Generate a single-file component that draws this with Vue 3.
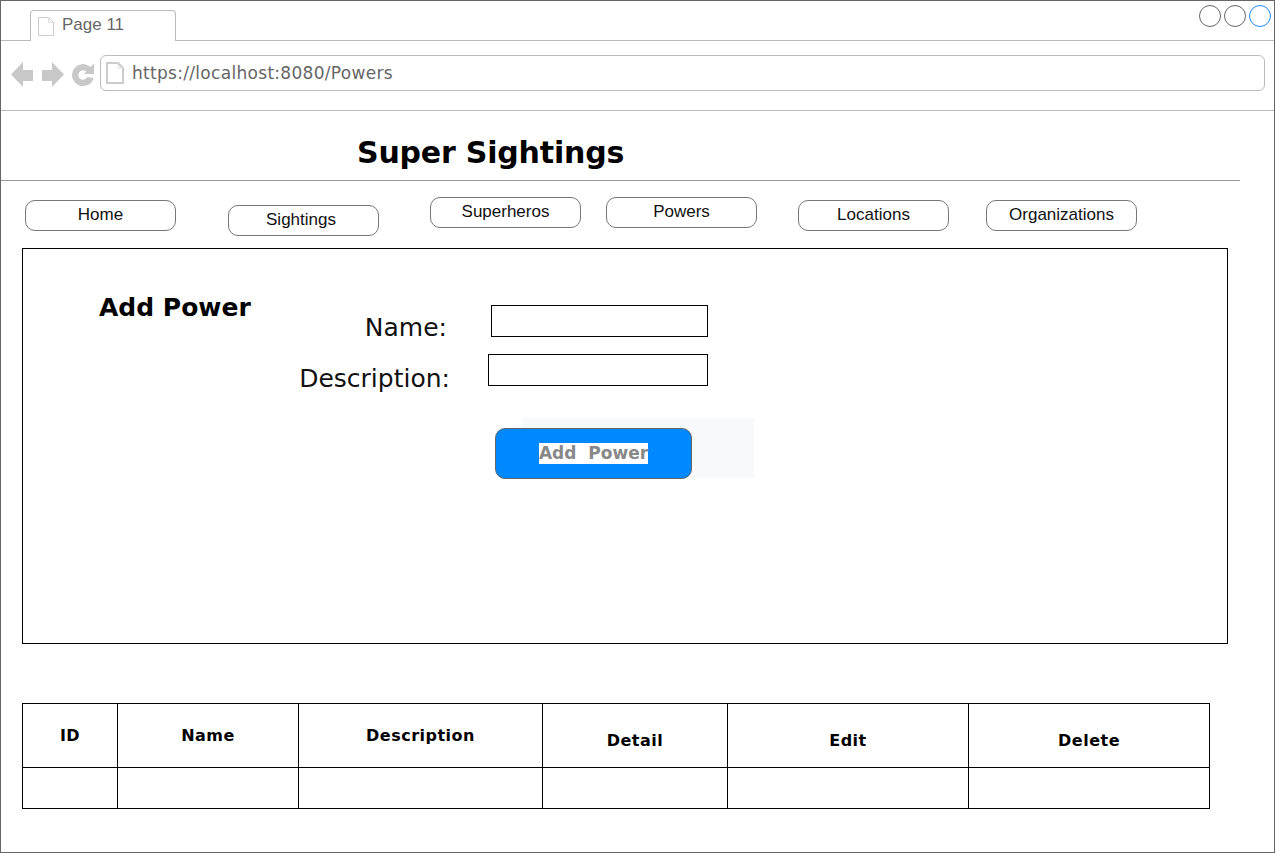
<template>
  <div class="window">
    <div class="tab-strip">
      <div class="tab">
        <svg class="page-icon" width="16" height="19" viewBox="0 0 16 19">
          <path d="M0.5 0.5H10.5L15.5 5.5V18.5H0.5Z" fill="#fff" stroke="#ccc" />
          <path d="M10.5 0.5V5.5H15.5" fill="none" stroke="#ddd" />
        </svg>
        <span>Page 11</span>
      </div>
      <div class="controls">
        <span class="dot"></span>
        <span class="dot"></span>
        <span class="dot dot-blue"></span>
      </div>
    </div>

    <div class="address-row">
      <svg class="nav-arrows" width="84" height="26" viewBox="0 0 84 26">
        <path d="M0 13.5L12 1V9H22V20H12V26Z" fill="#c8c8c8" />
        <path d="M53 13.5L41 1V9H31V20H41V26Z" fill="#c8c8c8" />
        <path
          d="M82.7 17A11 11 0 1 1 79.5 6L83 2.5V13H72.5L75.5 10.8A4.7 4.7 0 1 0 76.3 16Z"
          fill="#c8c8c8"
        />
      </svg>
      <div class="address">
        <svg class="address-icon" width="18" height="22" viewBox="0 0 18 22">
          <path d="M1 1H12L17 6V21H1Z" fill="#fff" stroke="#ccc" stroke-width="2" />
          <path d="M12 1V6H17" fill="none" stroke="#ddd" />
        </svg>
        <span>https://localhost:8080/Powers</span>
      </div>
    </div>

    <header class="title-row">
      <h1>Super Sightings</h1>
    </header>

    <nav class="nav">
      <button v-for="item in navItems" :key="item.label" :class="['nav-btn', item.cls]">
        {{ item.label }}
      </button>
    </nav>

    <section class="panel">
      <h2>Add Power</h2>
      <form class="power-form" @submit.prevent>
        <div class="form-row row-name">
          <label>Name:</label>
          <input type="text" />
        </div>
        <div class="form-row row-desc">
          <label>Description:</label>
          <input type="text" />
        </div>
        <div class="submit-area">
          <button class="submit-btn" type="submit"><span>Add&nbsp; Power</span></button>
        </div>
      </form>
    </section>

    <table class="powers">
      <colgroup>
        <col v-for="col in columns" :key="col.label" :style="{ width: col.width + 'px' }" />
      </colgroup>
      <thead>
        <tr>
          <th v-for="col in columns" :key="col.label" :class="{ low: col.low }">{{ col.label }}</th>
        </tr>
      </thead>
      <tbody>
        <tr>
          <td v-for="col in columns" :key="col.label"></td>
        </tr>
      </tbody>
    </table>
  </div>
</template>

<script setup>
const navItems = [
  { label: "Home", cls: "nav-home" },
  { label: "Sightings", cls: "nav-sightings" },
  { label: "Superheros", cls: "nav-superheros" },
  { label: "Powers", cls: "nav-powers" },
  { label: "Locations", cls: "nav-locations" },
  { label: "Organizations", cls: "nav-organizations" },
];

const columns = [
  { label: "ID", width: 95 },
  { label: "Name", width: 181 },
  { label: "Description", width: 244 },
  { label: "Detail", width: 185, low: true },
  { label: "Edit", width: 241, low: true },
  { label: "Delete", width: 241, low: true },
];
</script>

<style>
body {
  margin: 0;
  background: #fff;
}
</style>

<style scoped>
.window {
  box-sizing: border-box;
  width: 1275px;
  height: 853px;
  border: 1px solid #666;
  overflow: hidden;
  font-family: "Liberation Sans", Arial, sans-serif;
  color: #000;
}

.tab-strip {
  box-sizing: border-box;
  display: flex;
  height: 40px;
  border-bottom: 1px solid #bbb;
}

.tab {
  box-sizing: border-box;
  display: flex;
  align-items: flex-start;
  width: 146px;
  height: 31px;
  margin: 9px 0 -1px 29px;
  padding: 4px 0 0 7px;
  background: #fff;
  border: 1px solid #bbb;
  border-bottom: none;
  border-radius: 4px 4px 0 0;
  font-size: 17px;
  color: #666;
}

.page-icon {
  margin: 2px 8px 0 0;
}

.controls {
  display: flex;
  gap: 3px;
  margin: 4px 3px 0 auto;
}

.dot {
  box-sizing: border-box;
  width: 22px;
  height: 22px;
  border: 1px solid #666;
  border-radius: 50%;
}

.dot-blue {
  border-color: #1e90ff;
}

.address-row {
  box-sizing: border-box;
  display: flex;
  align-items: center;
  height: 70px;
  padding: 0 9px 6px 10px;
  border-bottom: 1px solid #bbb;
}

.nav-arrows {
  flex: none;
  margin-top: 3px;
}

.address {
  box-sizing: border-box;
  display: flex;
  align-items: center;
  flex: 1;
  height: 36px;
  margin: 1px 0 0 5px;
  padding-left: 5px;
  border: 1px solid #bbb;
  border-radius: 6px;
  font-family: "DejaVu Sans", sans-serif;
  font-size: 17px;
  letter-spacing: 0.3px;
  color: #666;
}

.address-icon {
  margin-right: 8px;
}

.title-row {
  box-sizing: border-box;
  width: 1239px;
  height: 70px;
  padding-left: 356px;
  border-bottom: 1px solid #999;
}

h1 {
  margin: 0;
  padding-top: 22px;
  font-family: "DejaVu Sans", sans-serif;
  font-size: 30px;
  line-height: 40px;
  font-weight: 700;
  letter-spacing: -0.2px;
}

.nav {
  display: flex;
  align-items: flex-start;
  height: 67px;
  padding-left: 24px;
}

.nav-btn {
  box-sizing: border-box;
  width: 151px;
  height: 31px;
  padding: 0 0 2px;
  background: #fff;
  border: 1px solid #777;
  border-radius: 10px;
  font-family: "Liberation Sans", Arial, sans-serif;
  font-size: 17px;
  color: #111;
}

.nav-home {
  margin-top: 19px;
}

.nav-sightings {
  margin: 24px 0 0 52px;
  padding-right: 5px;
}

.nav-superheros {
  margin: 16px 0 0 51px;
}

.nav-powers {
  margin: 16px 0 0 25px;
}

.nav-locations {
  margin: 19px 0 0 41px;
}

.nav-organizations {
  margin: 19px 0 0 37px;
}

.panel {
  box-sizing: border-box;
  display: flex;
  align-items: flex-start;
  width: 1206px;
  height: 396px;
  margin-left: 21px;
  padding-left: 76px;
  border: 1px solid #000;
}

h2 {
  flex: none;
  width: 191px;
  margin: 42px 0 0;
  font-family: "DejaVu Sans", sans-serif;
  font-size: 25px;
  line-height: 34px;
  font-weight: 700;
}

.power-form {
  width: 418px;
  padding-top: 56px;
}

.form-row {
  display: flex;
  justify-content: flex-end;
  height: 32px;
}

.row-desc {
  margin-top: 17px;
}

label {
  font-family: "DejaVu Sans", sans-serif;
  font-size: 25px;
  line-height: 46px;
  color: #111;
}

.row-name label {
  margin-right: 44px;
}

.row-desc label {
  margin-right: 38px;
  line-height: 50px;
}

input {
  box-sizing: border-box;
  height: 32px;
  padding: 0;
  background: #fff;
  border: 1px solid #000;
  border-radius: 0;
}

.row-name input {
  width: 217px;
}

.row-desc input {
  width: 220px;
}

.submit-area {
  display: flex;
  width: 232px;
  height: 60px;
  margin: 32px 0 0 232px;
  background: #f8f9fb;
}

.submit-btn {
  box-sizing: border-box;
  flex: none;
  display: flex;
  align-items: center;
  justify-content: center;
  width: 197px;
  height: 51px;
  margin: 10px 0 0 -27px;
  padding: 0;
  background: #0088ff;
  border: 1px solid #666;
  border-radius: 10px;
}

.submit-btn span {
  background: #fff;
  font-family: "DejaVu Sans", sans-serif;
  font-size: 17px;
  line-height: 21px;
  font-weight: 700;
  color: #888;
}

.powers {
  table-layout: fixed;
  width: 1188px;
  margin: 59px 0 0 21px;
  border-collapse: collapse;
}

.powers th,
.powers td {
  box-sizing: border-box;
  padding: 0;
  border: 1px solid #000;
  text-align: center;
}

.powers th {
  height: 64px;
  font-family: "DejaVu Sans", sans-serif;
  font-size: 16px;
  font-weight: 700;
  letter-spacing: 0.5px;
}

.powers th.low {
  padding-top: 10px;
}

.powers td {
  height: 41px;
}
</style>
